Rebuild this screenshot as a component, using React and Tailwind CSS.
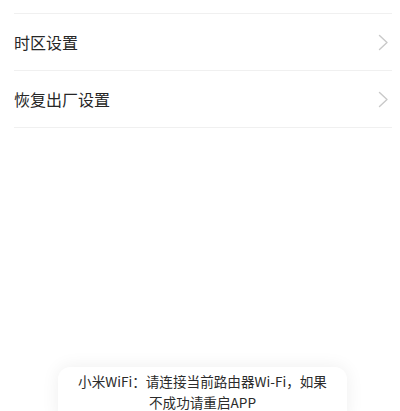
const rows = ['时区设置', '恢复出厂设置'];

const Chevron = () => (
  <svg width="11" height="17" viewBox="0 0 11 17" fill="none" className="shrink-0">
    <path d="M1.5 1.5L9 8.5L1.5 15.5" stroke="#c9c9c9" strokeWidth="1.4" strokeLinecap="round" strokeLinejoin="round" />
  </svg>
);

export default function App() {
  return (
    <div
      className="relative h-[411px] w-full overflow-hidden bg-white"
      style={{ fontFamily: '"Noto Sans CJK SC", "Noto Sans", sans-serif' }}
    >
      {/* tail of the previous row */}
      <div className="ml-[14px] mr-[8px] h-[14px] border-b border-[#f0f0f0]" />

      {rows.map((label) => (
        <div
          key={label}
          className="ml-[14px] mr-[8px] flex h-[57px] items-center justify-between border-b border-[#f0f0f0] pr-[3px]"
        >
          <span className="text-[16px] text-[#262626]">{label}</span>
          <Chevron />
        </div>
      ))}

      {/* toast */}
      <div className="absolute left-[58px] top-[367px] w-[289px] rounded-[12px] bg-white px-[10px] pb-[12px] pt-[4px] text-center text-[13.6px] leading-[21px] text-[#2b2b2b] shadow-[0_0_18px_rgba(0,0,0,0.07)]">
        <span className="block whitespace-nowrap">小米WiFi：请连接当前路由器Wi-Fi，如果</span>
        <span className="block whitespace-nowrap">不成功请重启APP</span>
      </div>
    </div>
  );
}
